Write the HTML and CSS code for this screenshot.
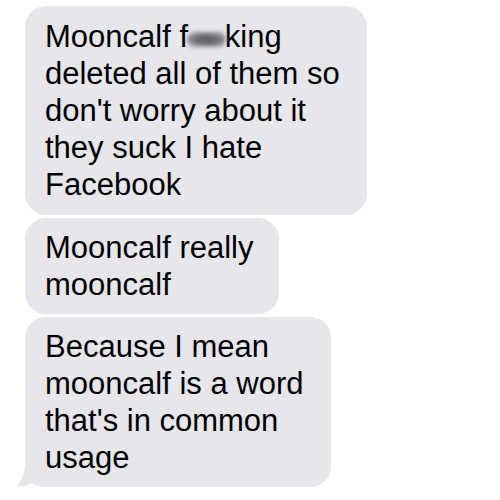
FILE: index.html
```html
<!DOCTYPE html>
<html lang="en">
<head>
    <meta charset="UTF-8">
    <meta name="viewport" content="width=device-width, initial-scale=1.0">
    <title>Messages</title>
    <link rel="stylesheet" href="styles.css">
</head>
<body>
    <div class="thread">
        <div class="bubble bubble-first">
            Mooncalf f<span class="censored">uc</span>king<br>
            deleted all of them so<br>
            don't worry about it<br>
            they suck I hate<br>
            Facebook
        </div>

        <div class="bubble bubble-second">
            Mooncalf really<br>
            mooncalf
        </div>

        <div class="bubble bubble-last">
            Because I mean<br>
            mooncalf is a word<br>
            that's in common<br>
            usage
            <svg class="tail" width="40" height="24" viewBox="0 0 40 24">
                <path d="M9 0 C9 12 5 19 0 23 C6 24 12 22 16 20 C20 23 26 24 32 24 L40 24 L40 0 Z" fill="#e6e6eb"/>
            </svg>
        </div>
    </div>
</body>
</html>
```

FILE: styles.css
```css
body {
    margin: 0;
    background-color: #ffffff;
    font-family: "Liberation Sans", Arial, sans-serif;
}

.thread {
    display: flex;
    flex-direction: column;
    align-items: flex-start;
    gap: 3px;
    padding: 6px 0 0 25px;
}

.bubble {
    position: relative;
    box-sizing: border-box;
    background-color: #e6e6eb;
    color: #000000;
    font-size: 31px;
    line-height: 37px;
    padding: 11px 0 11px 20px;
    border-radius: 21px;
    white-space: nowrap;
}

.bubble-first {
    width: 342px;
    padding-top: 12px;
    padding-bottom: 12px;
}

.bubble-second {
    width: 254px;
}

.bubble-last {
    width: 306px;
}

/* blurred-out letters */
.censored {
    position: relative;
    color: transparent;
    letter-spacing: 2px;
}

.censored::after {
    content: "";
    position: absolute;
    left: -1px;
    right: -1px;
    top: 13px;
    height: 15px;
    border-radius: 8px;
    background: radial-gradient(ellipse at center, #58585c 0%, #6e6e72 40%, #9a9a9e 75%, #c4c4c8 100%);
    filter: blur(2px);
}

.tail {
    position: absolute;
    z-index: -1;
    left: -9px;
    bottom: 0;
}
```
